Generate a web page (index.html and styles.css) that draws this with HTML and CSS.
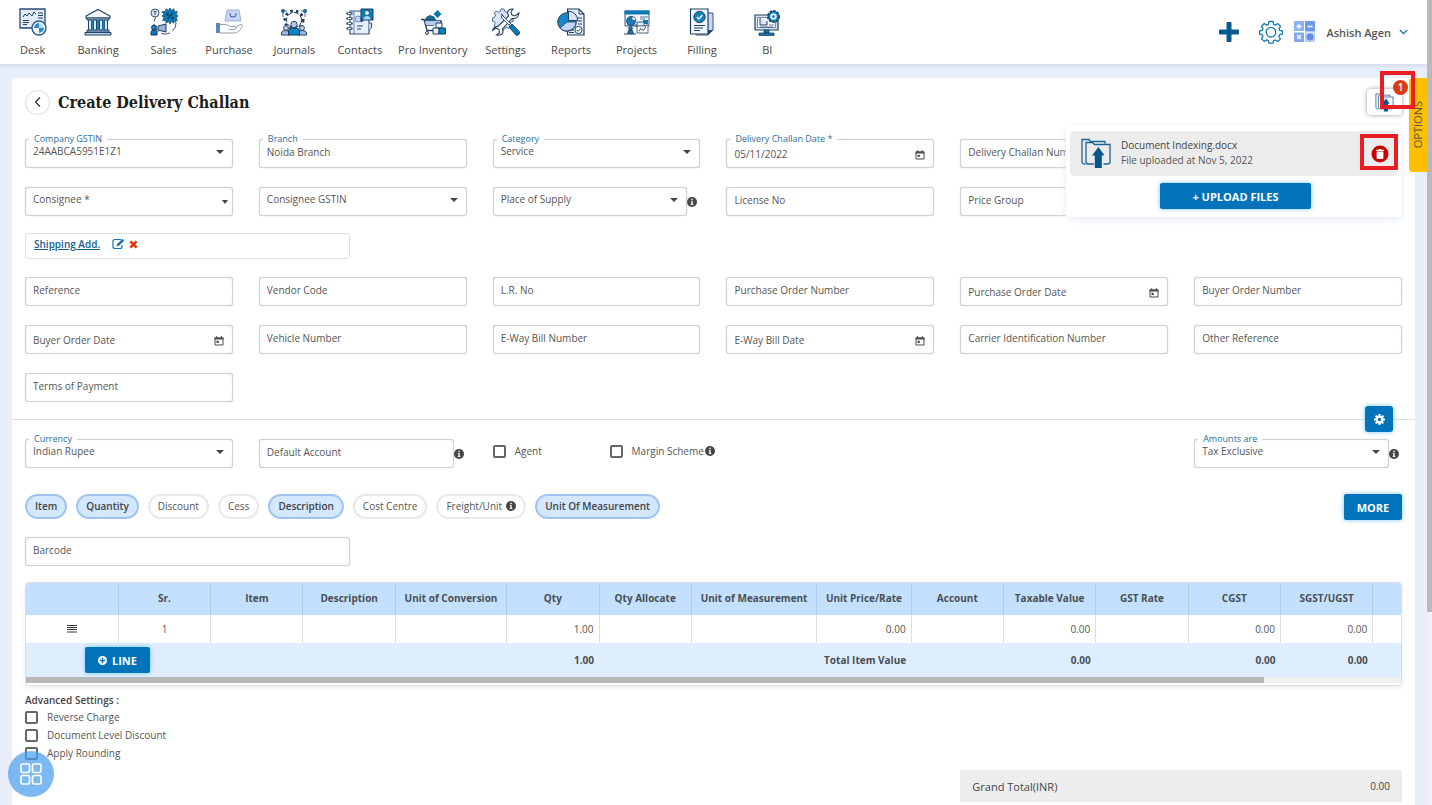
FILE: index.html
```html
<!DOCTYPE html>
<html lang="en">
<head>
<meta charset="utf-8">
<meta name="viewport" content="width=device-width, initial-scale=1">
<title>Create Delivery Challan</title>
<link rel="stylesheet" href="styles.css">
</head>
<body>
<svg class="sprite" aria-hidden="true">
  <symbol id="info" viewBox="0 0 12 12"><circle cx="6" cy="6" r="6" fill="#454545"/><path d="M4.4 5h2.5v3.6h.8v1.1H4.4V8.600h.8V6.100h-.8zM5.200 2.200h1.700v1.700H5.200z" fill="#fff"/></symbol>
  <symbol id="calendar" viewBox="0 0 10 10"><path d="M1 2h8v7H1z" fill="none" stroke="#4d4d4d"/><path d="M.5 1.500h9v2h-9zM2 .3h1.200v1.500H2zM6.800.3H8v1.500H6.800zM2.500 4.800h2.300v2.200H2.500z" fill="#4d4d4d"/></symbol>
  <symbol id="folder-up" viewBox="0 0 30 31"><path d="M4.500 26H3.500Q1 26 1 23.500V1.500h7l1.500 2H24v2M5 23V4.500h6.500l2 2H29V24q0 2-2.500 2h-4M13 26H7q-2 0-2-3" fill="none" stroke="#1c6494" stroke-width="1.300"/><path d="M17.500 9l6 8.500h-2.700V30h-7V17.500H11z" fill="#06558c"/></symbol>
</svg>

<header class="topbar">
  <nav class="nav" aria-label="Main">
    <a class="nav__item" href="#">
      <svg class="nav__icon" viewBox="0 0 28 28"><path d="M1 1h25v19H1z" fill="#e3ebfc" stroke="#2b4a78" stroke-width="1.300"/><path d="M4 9l2-3 2 2 2-3 3 3 2-4 2 2M19 5h5M19 7.500h5M19 10h5M4 12.500h6M4 14.500h6M4 16.500h4" fill="none" stroke="#22405f"/><circle cx="20" cy="20" r="7" fill="#fff" stroke="#23588a" stroke-width="1.400"/><path d="M20 20V15a5 5 0 0 0-5 5zM20 20v5a5 5 0 0 0 5-5z" fill="#2190cf"/><path d="M20 20h5a5 5 0 0 0-5-5z" fill="#bfe0f6"/></svg>
      <span>Desk</span></a>
    <a class="nav__item" href="#">
      <svg class="nav__icon" viewBox="0 0 28 28"><path d="M14 1.500L26 8v2H2V8z" fill="#f3f6ff" stroke="#22405f" stroke-width="1.200"/><path d="M3 10h22v2H3zM3 22h22v2H3zM1 24.500h26V27H1z" fill="#bccdf0" stroke="#22405f"/><path d="M4.500 12h3v10h-3zM20.500 12h3v10h-3zM9.500 12h3v10h-3zM15.500 12h3v10h-3z" fill="#dfe8fb" stroke="#22405f"/><path d="M7.500 12h2v10h-2zM13 12h2v10h-2zM18.500 12h2v10h-2z" fill="#1486c2"/></svg>
      <span>Banking</span></a>
    <a class="nav__item" href="#">
      <svg class="nav__icon" viewBox="0 0 28 28"><circle cx="15" cy="15" r="11" fill="none" stroke="#3c5676" stroke-dasharray="9 3"/><circle cx="5" cy="5" r="4" fill="#dbe5fa" stroke="#3c5676"/><path d="M5 3v4M3.500 3.500h3" stroke="#3c5676"/><path d="M20 0l1.500 2.500L24 .8l.3 2.900 3-.2-1.200 2.700L28 8l-1.900 1.800 1.200 2.700-3-.2-.3 2.900-2.500-1.700L20 16l-1.500-2.500-2.500 1.700-.3-2.900-3 .2 1.200-2.700L12 8l1.900-1.800-1.200-2.700 3 .2.300-2.900 2.500 1.700z" fill="#087bb9" stroke="#113d61" stroke-width=".7"/><path d="M17.500 11l5-6" stroke="#0c2f4c" stroke-width="1.200"/><circle cx="17.500" cy="6.500" r="1.200" fill="#0c2f4c"/><circle cx="22.500" cy="10" r="1.200" fill="#0c2f4c"/><path d="M8 18l8-2v8l-8-2z" fill="#96afdb" stroke="#173b5b"/><circle cx="4" cy="19.500" r="2.500" fill="#1486c2" stroke="#173b5b"/><path d="M1 27v-3q0-2 3-2t3 2v3z" fill="#087bb9" stroke="#173b5b"/></svg>
      <span>Sales</span></a>
    <a class="nav__item" href="#">
      <svg class="nav__icon" viewBox="0 0 28 28"><path d="M12 2h12l2 11H10z" fill="#c9d6f7" stroke="#8ca1cc" stroke-width=".8"/><path d="M15 5v1q0 3 3 3t3-3V5" fill="none" stroke="#52709e" stroke-width="1.200"/><path d="M5 16.500h5q3 0 5 2h4q2 0 2 1.500T19 21.500h-5M20 20l5-3.500q2-.5 2.500 1-2 6.500-8 7.500H5" fill="#fff" stroke="#8996a8" stroke-width=".9"/><path d="M1 15h4v10H1z" fill="#5887c0"/></svg>
      <span>Purchase</span></a>
    <a class="nav__item" href="#">
      <svg class="nav__icon" viewBox="0 0 28 28"><circle cx="14" cy="12" r="9" fill="none" stroke="#22405f" stroke-width="3" stroke-dasharray="2.500 3"/><circle cx="14" cy="12" r="7.500" fill="#fff" stroke="#22405f" stroke-dasharray="5 2"/><path d="M2 3h5M3 1v8M21 3h5M25 1v8" stroke="#3b6e9c"/><circle cx="3" cy="3" r="2" fill="#1b6a9f"/><circle cx="25" cy="3" r="2" fill="#1b6a9f"/><circle cx="6" cy="20" r="2.400" fill="#c3d4f6" stroke="#22405f"/><circle cx="22" cy="20" r="2.400" fill="#c3d4f6" stroke="#22405f"/><path d="M1.500 27v-2q0-2.500 4-2.500T10 25v2zM18 27v-2q0-2.500 4-2.500t4.500 2.500v2z" fill="#9ebae6" stroke="#22405f"/><circle cx="14" cy="16.500" r="3.200" fill="#b4c9f1" stroke="#22405f"/><path d="M8.500 27v-4q0-3 5.500-3t5.500 3v4z" fill="#0d84c3" stroke="#173b5b"/></svg>
      <span>Journals</span></a>
    <a class="nav__item" href="#">
      <svg class="nav__icon" viewBox="0 0 28 28"><path d="M4 3h19v23H4z" fill="#e7eefc" stroke="#34557f" stroke-width="1.200"/><path d="M8 3v23" stroke="#34557f" stroke-width=".7"/><path d="M1.500 5.500h4M1.500 10.500h4M1.500 15.500h4M1.500 20.500h4" stroke="#34557f" stroke-width="2.600" stroke-linecap="round"/><path d="M2 5.500h3M2 10.500h3M2 15.500h3M2 20.500h3" stroke="#fff"/><path d="M11 18h6M11 21h4" stroke="#22405f"/><circle cx="12" cy="11" r="3" fill="#c3d4f6" stroke="#6d8dc0"/><path d="M23 15h2.500v5L23 22" fill="#cad8f7" stroke="#34557f"/><path d="M15 1h12v11h-9l-3 2z" fill="#0a80bd" stroke="#173b5b"/><circle cx="21" cy="5" r="2.400" fill="#e8f1ff" stroke="#173b5b" stroke-width=".7"/><path d="M17.500 11.500q0-3.500 3.500-3.500t3.500 3.500z" fill="#b8cdf3"/></svg>
      <span>Contacts</span></a>
    <a class="nav__item nav__item--wide" href="#">
      <svg class="nav__icon" viewBox="0 0 28 28"><path d="M18.500 2l4 4-4 4-4-4z" fill="#0873a9"/><path d="M6 12l2-3 3-1.500 4 1.500 1.500 3z" fill="#0873a9" stroke="#173b5b" stroke-width=".8"/><path d="M2 11.500h3l3 11h8M5.500 13H22v6M7 17h8" fill="none" stroke="#22405f" stroke-width="1.300"/><path d="M6 13h15l-1 4H7z" fill="#b4cbed"/><circle cx="8" cy="25" r="1.500" fill="none" stroke="#22405f"/><path d="M17 15h6v5h-6z" fill="#edf3ff" stroke="#22405f"/><path d="M14 20h6v6h-6z" fill="#e3ecfb" stroke="#22405f"/><path d="M20 20h6.500v6H20z" fill="#0c80bd" stroke="#22405f"/></svg>
      <span>Pro Inventory</span></a>
    <a class="nav__item" href="#">
      <svg class="nav__icon" viewBox="0 0 28 28"><path d="M9 1h3l.7 2.400 2.300 1 2.300-1.200 2 2-1.200 2.300 1 2.300 2 .7v3l-2.400.7-1 2.300 1.200 2-2 2-2.300-1.200-2.300 1-.7 2H9l-.7-2.400-2.300-1-2 1-2-2 1.200-2-1-2.300L.5 13v-3l2-.7 1-2.300L2.300 5l2-2 2.200 1.200 2-1z" fill="#dce5fb" stroke="#3c5a86" stroke-width=".9"/><path d="M12 9l-3-3M10 8l4 4M27 5l-4 3-3-1-1-3 2-3q-4-.5-5.500 3l1 4L6 18.500q-4-.5-5.500 4L4 20l3 1.500.5 3.500-3 2q5 1 6.500-3l-.5-3L20 10.500q6 1 7-5.500z" fill="#fff" stroke="#22405f" stroke-width="1.100"/><path d="M9 9l1.500-1.500 8 8-1.500 1.500z" fill="#e8effe" stroke="#22405f" stroke-width=".8"/><path d="M17 19l3-3 7.500 8q.5 3-3 3.500z" fill="#087bb9" stroke="#143e61"/></svg>
      <span>Settings</span></a>
    <a class="nav__item" href="#">
      <svg class="nav__icon" viewBox="0 0 28 28"><path d="M10.500 1H22l5 5v21H10.500z" fill="#e9effd" stroke="#22405f" stroke-width="1.200"/><path d="M22 1v5h5M21 10h4M21 13h4M21 16h4M12 22h5M12 24.500h5" fill="none" stroke="#22405f"/><circle cx="10" cy="14" r="9.300" fill="#1687c4" stroke="#22405f"/><path d="M10 14L3 20a9.300 9.300 0 0 0 16-6z" fill="#c5d5f6" stroke="#22405f" stroke-width=".8"/><path d="M11.500 12.500V3.200a9.300 9.300 0 0 1 9.300 9.300z" fill="#d9e4fa" stroke="#22405f"/><circle cx="21.500" cy="22" r="3.600" fill="#fff" stroke="#22405f"/><path d="M19.800 22l1.300 1.400 2.400-2.800" fill="none" stroke="#22405f"/></svg>
      <span>Reports</span></a>
    <a class="nav__item" href="#">
      <svg class="nav__icon" viewBox="0 0 28 28"><path d="M2 3h24v15H2z" fill="#f0f5ff" stroke="#315c8b"/><path d="M1.500 2.500h25v4h-25zM20 12h5v4h-5z" fill="#0d79b5"/><path d="M17 9h8M17 11h5M4 17h10" stroke="#22405f" stroke-width=".7"/><circle cx="8" cy="13" r="4.500" fill="#127fbb" stroke="#22405f" stroke-width=".8"/><path d="M9 12V8.500a4 4 0 0 1 4 4z" fill="#fff" stroke="#22405f" stroke-width=".7"/><path d="M14 14h7v5h-7z" fill="#dce7fb" stroke="#22405f" stroke-width=".8"/><path d="M14 18h9l1-1.500 1 1.500v7H14z" fill="#fff" stroke="#22405f" stroke-width=".8"/><path d="M16 23l2-2.500 2 2 3-3.500" fill="none" stroke="#22405f"/><circle cx="7.500" cy="20.500" r="1.800" fill="#1687c4" stroke="#22405f"/><path d="M5 26v-2q0-2 2.500-2t2.500 2v2M1 26h12" fill="#0d79b5" stroke="#22405f"/></svg>
      <span>Projects</span></a>
    <a class="nav__item" href="#">
      <svg class="nav__icon" viewBox="0 0 28 28"><path d="M8 5h17v17l-5 5H8z" fill="#c8d7f8" stroke="#34557f"/><path d="M20 27v-5h5z" fill="#1b4d79"/><path d="M2.500 1H20v25H2.500z" fill="#f4f7ff" stroke="#22405f" stroke-width="1.200"/><circle cx="11.500" cy="9" r="5.700" fill="#0e83c2" stroke="#22405f"/><path d="M8.800 9l2 2 3.600-4" fill="none" stroke="#fff" stroke-width="1.300"/><path d="M6 17.500h11M6 20h9M6 22.500h6" stroke="#22405f"/></svg>
      <span>Filling</span></a>
    <a class="nav__item" href="#">
      <svg class="nav__icon" viewBox="0 0 28 28"><path d="M2 7h23v15H2z" fill="#d5e2fb" stroke="#22405f" stroke-width="1.200"/><path d="M4.500 9.500h18v10h-18z" fill="#fff" stroke="#4e709c" stroke-width=".8"/><path d="M7 10v7h7v-4" fill="#dce7fb" stroke="#22405f"/><path d="M16 17h5M7 19h13" stroke="#22405f" stroke-width=".7"/><path d="M11 22h5v3h-5zM6 25h15v2.500H6z" fill="#1176ad" stroke="#22405f" stroke-width=".8"/><circle cx="20.500" cy="8.500" r="5.700" fill="#0e7db8" stroke="#174263" stroke-width="1.600" stroke-dasharray="2.500 1.200"/><circle cx="20.500" cy="8.500" r="3.200" fill="#e7f2ff"/><circle cx="20.500" cy="8.500" r="1.200" fill="#1e5b87"/></svg>
      <span>BI</span></a>
  </nav>
  <div class="tools">
    <button class="icon-button" type="button" aria-label="Add new"><svg class="tools__plus" viewBox="0 0 20 20"><path d="M7.500 1q0-1 1-1h3q1 0 1 1v6.500H19q1 0 1 1v3q0 1-1 1h-6.500V19q0 1-1 1h-3q-1 0-1-1v-6.500H1q-1 0-1-1v-3q0-1 1-1h6.500z" fill="#075a8e"/></svg></button>
    <button class="icon-button" type="button" aria-label="Preferences"><svg class="tools__gear" viewBox="0 0 24 24"><path d="M10 1.500h4l.6 2.800 1.800.8L18.800 3.600l2.700 2.700L20 8.700l.7 1.700 2.800.6v3l-2.800.7-.8 1.800 1.600 2.300-2.700 2.700-2.400-1.500-1.800.7-.6 2.500h-4l-.6-2.600-1.800-.7-2.400 1.500-2.700-2.700L4 16.500l-.8-1.800L.5 14v-3l2.800-.7.700-1.700-1.500-2.400 2.700-2.700 2.400 1.600 1.800-.8z" fill="none" stroke="#147bb5" stroke-width="1.300" stroke-linejoin="round"/><circle cx="12" cy="12.200" r="4.800" fill="none" stroke="#147bb5" stroke-width="1.300"/></svg></button>
    <button class="icon-button" type="button" aria-label="Calculator"><svg class="tools__calc" viewBox="0 0 22 22"><path d="M0 1q0-1 1-1h9v10H0zM12 12h9v8q0 1-1 1h-8z" fill="#8fb3ee"/><path d="M0 11.500h10v9.500H1q-1 0-1-1z" fill="#80a8eb"/><path d="M11 0h9q1 0 1 1v9.500H11z" fill="#6b9ae8"/><path d="M11 11.500h10V20q0 1-1 1h-9z" fill="#b9cef4"/><path d="M5 3v5M2.500 5.500h5M13.500 5.500h5M3 14l4 4M7 14l-4 4" stroke="#fff" stroke-width="1.300"/><circle cx="16" cy="16" r="3.500" fill="#608ddd"/></svg></button>
    <button class="account" type="button"><span class="account__name">Ashish Agen</span><svg class="account__chevron" viewBox="0 0 9 6"><path d="M.8 1l3.700 3.700L8.200 1" fill="none" stroke="#1a6fa5" stroke-width="1.200"/></svg></button>
  </div>
</header>

<main class="page">
  <section class="card">
    <div class="heading">
      <button class="back" type="button" aria-label="Back"><svg class="back__icon" viewBox="0 0 8 12"><path d="M6 1.500L1.500 6 6 10.500" fill="none" stroke="#333" stroke-width="1.300"/></svg></button>
      <h1 class="title">Create Delivery Challan</h1>
      <button class="attach" type="button" aria-label="Attachments"><svg class="attach__icon"><use href="#folder-up"/></svg><span class="badge">1</span></button>
    </div>

    <div class="grid">
      <div class="field field--select"><label class="field__label" for="gstin">Company GSTIN</label><select class="control" id="gstin"><option>24AABCA5951E1Z1</option></select></div>
      <div class="field"><label class="field__label" for="branch">Branch</label><input class="control" id="branch" value="Noida Branch"></div>
      <div class="field field--select"><label class="field__label" for="category">Category</label><select class="control" id="category"><option>Service</option></select></div>
      <div class="field field--date"><label class="field__label" for="challan-date">Delivery Challan Date *</label><input class="control" id="challan-date" value="05/11/2022"><svg class="field__calendar"><use href="#calendar"/></svg></div>
      <div class="field"><input class="control" aria-label="Delivery Challan Number" placeholder="Delivery Challan Number"></div>
      <div></div>
      <div class="field field--combo"><select class="control" aria-label="Consignee"><option>Consignee *</option></select></div>
      <div class="field field--select"><select class="control" aria-label="Consignee GSTIN"><option>Consignee GSTIN</option></select></div>
      <div class="with-info"><div class="field field--select"><select class="control" aria-label="Place of Supply"><option>Place of Supply</option></select></div><svg class="info"><use href="#info"/></svg></div>
      <div class="field"><input class="control" aria-label="License No" placeholder="License No"></div>
      <div class="field"><input class="control" aria-label="Price Group" placeholder="Price Group"></div>
    </div>

    <div class="quarters quarters--shipping">
      <div class="shipping">
        <a class="shipping__link" href="#">Shipping Add.</a>
        <button class="icon-button" type="button" aria-label="Edit shipping address"><svg class="shipping__edit" viewBox="0 0 13 12"><path d="M9 1.500H3q-2 0-2 2v5q0 2 2 2h5q2 0 2-2V7" fill="none" stroke="#1a73b3" stroke-width="1.200"/><path d="M4.500 8.500l.6-2.500L10.500.7l1.800 1.800L7 7.800z" fill="#1a73b3"/></svg></button>
        <button class="icon-button" type="button" aria-label="Remove shipping address"><svg class="shipping__remove" viewBox="0 0 8 8"><path d="M1.200 1.200l5.600 5.600M6.800 1.200L1.200 6.800" stroke="#dc3410" stroke-width="2.400"/></svg></button>
      </div>
    </div>

    <div class="grid">
      <div class="field"><input class="control" aria-label="Reference" placeholder="Reference"></div>
      <div class="field"><input class="control" aria-label="Vendor Code" placeholder="Vendor Code"></div>
      <div class="field"><input class="control" aria-label="L.R. No" placeholder="L.R. No"></div>
      <div class="field"><input class="control" aria-label="Purchase Order Number" placeholder="Purchase Order Number"></div>
      <div class="field field--date"><input class="control" aria-label="Purchase Order Date" placeholder="Purchase Order Date"><svg class="field__calendar"><use href="#calendar"/></svg></div>
      <div class="field"><input class="control" aria-label="Buyer Order Number" placeholder="Buyer Order Number"></div>
      <div class="field field--date"><input class="control" aria-label="Buyer Order Date" placeholder="Buyer Order Date"><svg class="field__calendar"><use href="#calendar"/></svg></div>
      <div class="field"><input class="control" aria-label="Vehicle Number" placeholder="Vehicle Number"></div>
      <div class="field"><input class="control" aria-label="E-Way Bill Number" placeholder="E-Way Bill Number"></div>
      <div class="field field--date"><input class="control" aria-label="E-Way Bill Date" placeholder="E-Way Bill Date"><svg class="field__calendar"><use href="#calendar"/></svg></div>
      <div class="field"><input class="control" aria-label="Carrier Identification Number" placeholder="Carrier Identification Number"></div>
      <div class="field"><input class="control" aria-label="Other Reference" placeholder="Other Reference"></div>
      <div class="field"><input class="control" aria-label="Terms of Payment" placeholder="Terms of Payment"></div>
    </div>

    <div class="divider">
      <button class="divider__gear" type="button" aria-label="Field settings"><svg class="divider__icon" viewBox="0 0 12 12"><circle cx="6" cy="6" r="3.200" fill="none" stroke="#fff" stroke-width="2.600"/><path d="M6 0v2.500M6 9.500V12M0 6h2.500M9.500 6H12M1.800 1.800l1.700 1.700M8.500 8.500l1.700 1.700M1.800 10.200l1.700-1.700M8.500 3.500l1.700-1.700" stroke="#fff" stroke-width="2.200"/></svg></button>
    </div>

    <div class="grid grid--twelve">
      <div class="field field--select span-2"><label class="field__label" for="currency">Currency</label><select class="control" id="currency"><option>Indian Rupee</option></select></div>
      <div class="with-info span-2"><div class="field"><input class="control" aria-label="Default Account" placeholder="Default Account"></div><svg class="info"><use href="#info"/></svg></div>
      <label class="check"><input class="check__box" type="checkbox"><span>Agent</span></label>
      <label class="check span-3"><input class="check__box" type="checkbox"><span>Margin Scheme</span><svg class="info info--inline"><use href="#info"/></svg></label>
      <div class="with-info span-last"><div class="field field--select"><label class="field__label" for="amounts">Amounts are</label><select class="control" id="amounts"><option>Tax Exclusive</option></select></div><svg class="info"><use href="#info"/></svg></div>
    </div>

    <div class="columns-bar">
      <button class="chip chip--on" type="button">Item</button>
      <button class="chip chip--on" type="button">Quantity</button>
      <button class="chip" type="button">Discount</button>
      <button class="chip" type="button">Cess</button>
      <button class="chip chip--on" type="button">Description</button>
      <button class="chip" type="button">Cost Centre</button>
      <button class="chip" type="button">Freight/Unit<svg class="info info--chip"><use href="#info"/></svg></button>
      <button class="chip chip--on" type="button">Unit Of Measurement</button>
      <button class="button button--more" type="button">MORE</button>
    </div>

    <div class="quarters quarters--barcode">
      <div class="field"><input class="control" aria-label="Barcode" placeholder="Barcode"></div>
    </div>

    <div class="sheet">
      <div class="sheet__view">
        <table class="items">
          <colgroup><col span="4" class="col"><col class="col-conversion"><col span="2" class="col"><col class="col-measure"><col class="col-price"><col span="5" class="col"><col class="col-rest"></colgroup>
          <thead><tr><th></th><th>Sr.</th><th>Item</th><th>Description</th><th>Unit of Conversion</th><th>Qty</th><th>Qty Allocate</th><th>Unit of Measurement</th><th>Unit Price/Rate</th><th>Account</th><th>Taxable Value</th><th>GST Rate</th><th>CGST</th><th>SGST/UGST</th><th></th></tr></thead>
          <tbody><tr><td><svg class="grip" viewBox="0 0 10 10"><path d="M0 1.500h10M0 3.500h10M0 5.500h10M0 8h10" stroke="#333" stroke-width="1.100"/></svg></td><td>1</td><td></td><td></td><td></td><td class="num">1.00</td><td></td><td></td><td class="num">0.00</td><td></td><td class="num">0.00</td><td></td><td class="num">0.00</td><td class="num">0.00</td><td></td></tr></tbody>
          <tfoot><tr><td colspan="2"><button class="button button--line" type="button"><svg class="button__icon" viewBox="0 0 10 10"><circle cx="5" cy="5" r="5" fill="#fff"/><path d="M5 2v6M2 5h6" stroke="#0073bb" stroke-width="1.500"/></svg>LINE</button></td><td></td><td></td><td></td><td class="num">1.00</td><td></td><td></td><td class="num">Total Item Value</td><td></td><td class="num">0.00</td><td></td><td class="num">0.00</td><td class="num">0.00</td><td></td></tr></tfoot>
        </table>
      </div>
      <div class="sheet__scroll"><div class="sheet__thumb"></div></div>
    </div>

    <fieldset class="advanced">
      <legend class="advanced__title">Advanced Settings :</legend>
      <label class="check"><input class="check__box" type="checkbox"><span>Reverse Charge</span></label>
      <label class="check"><input class="check__box" type="checkbox"><span>Document Level Discount</span></label>
      <label class="check"><input class="check__box" type="checkbox"><span>Apply Rounding</span></label>
    </fieldset>

    <div class="grid grid--total">
      <div class="total"><span>Grand Total(INR)</span><span class="total__value">0.00</span></div>
    </div>

    <div class="uploads">
      <div class="file">
        <svg class="file__icon"><use href="#folder-up"/></svg>
        <div class="file__text"><div class="file__name">Document Indexing.docx</div><div>File uploaded at Nov 5, 2022</div></div>
        <button class="file__delete" type="button" aria-label="Delete file"><svg class="file__trash" viewBox="0 0 18 18"><circle cx="9" cy="9" r="8.500" fill="#c90202"/><path d="M5 4.800h2.500l.5-.8h2l.5.8H13v1.200H5zM5.600 6.500h6.800v6.500q0 1-1 1H6.600q-1 0-1-1z" fill="#fff"/></svg></button>
      </div>
      <button class="button button--upload" type="button">+ UPLOAD FILES</button>
    </div>
    <div class="marker marker--badge"></div>
    <div class="marker marker--delete"></div>
  </section>
</main>

<button class="options" type="button">OPTIONS</button>
<div class="scrollbar"><div class="scrollbar__thumb"></div></div>
<button class="launcher" type="button" aria-label="Open apps"><svg class="launcher__icon" viewBox="0 0 22 22"><g fill="none" stroke="#fff" stroke-width="1.700"><rect x="1" y="1" width="8.500" height="8.500" rx="1.500"/><rect x="12.500" y="1" width="8.500" height="8.500" rx="1.500"/><rect x="1" y="12.500" width="8.500" height="8.500" rx="1.500"/><rect x="12.500" y="12.500" width="8.500" height="8.500" rx="1.500"/></g></svg></button>
</body>
</html>
```
FILE: styles.css
```css
* { box-sizing: border-box; }

body {
  display: flex;
  flex-direction: column;
  min-height: 100vh;
  margin: 0;
  background: #e8eefa;
  color: #555;
  font-family: "Open Sans", sans-serif;
  font-size: 10px;
  line-height: 15px;
}

button, input, select { margin: 0; color: inherit; font: inherit; }
button { padding: 0; border: 0; background: none; cursor: pointer; }
svg { display: block; flex: none; }
.sprite { position: absolute; width: 0; height: 0; }

/* Top bar */
.topbar {
  display: flex;
  align-items: center;
  justify-content: space-between;
  height: 64px;
  padding-right: 24px;
  background: #fff;
  box-shadow: 0 1px 5px #cdd4e4;
  font-size: 11px;
}
.nav { display: flex; flex: 0 1 800px; }
.nav__item {
  display: flex;
  flex: 1 1 65px;
  flex-direction: column;
  align-items: center;
  gap: 6px;
  color: #484848;
  text-decoration: none;
  white-space: nowrap;
}
.nav__item--wide { flex-basis: 80px; }
.nav__icon { width: 28px; height: 28px; }
.tools { display: flex; align-items: center; }
.tools__plus { width: 20px; height: 20px; }
.tools__gear { width: 24px; height: 24px; margin-left: 20px; }
.tools__calc { width: 22px; height: 22px; margin-left: 11px; }
.account { display: flex; align-items: center; gap: 8px; margin-left: 10px; font-weight: 600; }
.account__name { white-space: nowrap; }
.account__chevron { width: 9px; height: 6px; }

/* Card */
.page { display: flex; flex: 1; padding: 14px 17px 0 12px; }
.card {
  position: relative;
  flex: 1;
  min-width: 0;
  padding: 11px 13px 3px;
  border-radius: 4px 4px 0 0;
  background: #fff;
}
.heading { display: flex; align-items: center; gap: 8px; height: 26px; margin-bottom: 24px; }
.back {
  display: flex;
  align-items: center;
  justify-content: center;
  width: 25px;
  height: 25px;
  border: 1px solid #ddd;
  border-radius: 50%;
}
.back__icon { width: 8px; height: 12px; }
.title {
  margin: 0;
  padding-top: 2px;
  color: #1c1c1c;
  font: bold 16px/20px "DejaVu Serif Condensed", "DejaVu Serif", serif;
}
.attach {
  position: relative;
  width: 35px;
  height: 26px;
  margin-left: auto;
  padding: 4px 8px;
  border-radius: 4px;
  box-shadow: 0 0 4px #999;
}
.attach__icon { width: 19px; height: 19px; }
.badge {
  position: absolute;
  z-index: 4;
  top: -9px;
  right: -6px;
  width: 15px;
  height: 15px;
  border-radius: 50%;
  background: #dd3a10;
  color: #fff;
  font-weight: 600;
}

/* Form */
.grid { display: grid; grid-template-columns: repeat(6, minmax(0, 1fr)); gap: 19px 26px; }
.grid--twelve { grid-template-columns: repeat(12, minmax(0, 1fr)); }
.span-2 { grid-column: span 2; }
.span-3 { grid-column: span 3; }
.span-last { grid-column: 11 / 13; }
.quarters { display: grid; grid-template-columns: repeat(4, minmax(0, 1fr)); gap: 26px; }
.quarters--shipping { margin: 17px 0 18px; }
.quarters--barcode { margin-top: 17px; }
.field { position: relative; flex: 1; height: 29px; }
.control {
  display: block;
  width: 100%;
  height: 29px;
  padding: 0 7px 4px;
  border: 1px solid #d2d2d2;
  border-radius: 3px;
  outline: 0;
  appearance: none;
  background: #fff;
  box-shadow: 0 0 1px #bbb, inset 0 0 3px #f2f2f2;
}
.control::placeholder { color: #555; opacity: 1; }
.field--date .control { padding-top: 1px; padding-bottom: 1px; }
.field__label {
  position: absolute;
  top: -7px;
  left: 4px;
  padding: 0 5px;
  background: linear-gradient(#fff, #fff) center / 100% 5px no-repeat;
  color: #2b6f9c;
  font-size: 9px;
  line-height: 14px;
}
.field__calendar { position: absolute; top: 11px; right: 9px; width: 10px; height: 10px; }
.field--select::after, .field--combo::after {
  content: "";
  position: absolute;
  top: 11px;
  right: 9px;
  border: 4px solid transparent;
  border-top: 4px solid #444;
  border-bottom: 0;
  pointer-events: none;
}
.field--combo::after { top: 13px; right: 5px; border-width: 4px 3px 0; }
.with-info { display: flex; align-items: center; padding-right: 3px; }
.info { width: 10px; height: 10px; }
.info--inline { margin-left: -8px; }
.info--chip { margin-left: 4px; }
.shipping {
  display: flex;
  align-items: center;
  height: 26px;
  padding: 0 8px 4px;
  border: 1px solid #e0e0e0;
  border-radius: 3px;
}
.shipping__link { margin-right: 12px; color: #14608f; font-weight: 600; }
.shipping__edit { width: 13px; height: 12px; margin-right: 4px; }
.shipping__remove { width: 9px; height: 9px; }

.divider { position: relative; height: 1px; margin: 17px -13px 19px; background: #e0e0e0; }
.divider__gear {
  position: absolute;
  top: -13px;
  right: 22px;
  display: flex;
  align-items: center;
  justify-content: center;
  width: 28px;
  height: 26px;
  border-radius: 3px;
  background: #0073bb;
  box-shadow: 0 0 5px #7bc4f0;
}
.divider__icon { width: 11px; height: 11px; }

.check { display: flex; align-items: center; gap: 9px; height: 24px; white-space: nowrap; }
.check__box {
  width: 13px;
  height: 13px;
  border: 2px solid #666;
  border-radius: 2px;
  appearance: none;
}

/* Column chips */
.columns-bar { display: flex; align-items: flex-start; gap: 9px; margin-top: 26px; }
.chip {
  display: flex;
  align-items: center;
  height: 25px;
  padding: 0 8px 1px;
  border: 2px solid #e8e8e8;
  border-radius: 13px;
  white-space: nowrap;
}
.chip--on { border-color: #9fc4f0; background: #d3e7fd; color: #444; font-weight: 600; }
.button {
  display: flex;
  align-items: center;
  justify-content: center;
  height: 26px;
  border-radius: 2px;
  background: #0073bb;
  box-shadow: 0 0 5px #7bc4f0;
  color: #fff;
  font-size: 11px;
  font-weight: 700;
}
.button--more { width: 58px; margin-left: auto; }
.button--line { gap: 5px; width: 65px; margin-left: 59px; }
.button__icon { width: 9px; height: 9px; }

/* Items table */
.sheet {
  margin-top: 16px;
  padding-bottom: 2px;
  overflow: hidden;
  border: 1px solid #ddd;
  border-radius: 4px;
  box-shadow: 0 2px 5px #eee;
}
.sheet__view { overflow: hidden; }
.items { width: 111%; min-width: 1532px; border-collapse: collapse; table-layout: fixed; }
.col { width: 92px; }
.col-conversion { width: 111px; }
.col-measure { width: 125px; }
.col-price { width: 94px; }
.col-rest { width: 184px; }
.items th, .items td { padding: 0; text-align: center; white-space: nowrap; }
.items th { height: 32px; padding-bottom: 2px; border-right: 1px solid #aecdec; background: #c3e0fe; color: #4a4f55; font-weight: 700; }
.items tbody td { height: 28px; border-right: 1px solid #ddd; }
.items tfoot td { height: 34px; background: #deeefe; color: #4a4f55; font-weight: 700; }
.items .num { padding-right: 5px; text-align: right; }
.grip { width: 10px; height: 10px; margin: 0 auto; }
.sheet__scroll { height: 6px; background: #f1f1f1; }
.sheet__thumb { width: 90%; height: 6px; background: #b9b9b9; }

/* Advanced settings and total */
.advanced { margin: 7px 0 0; padding: 0; border: 0; }
.advanced__title { padding: 0; color: #444; font-weight: 600; }
.advanced .check { height: 18px; }
.grid--total { margin-top: 8px; }
.total {
  display: flex;
  grid-column: 5 / 7;
  align-items: center;
  justify-content: space-between;
  height: 32px;
  padding: 0 12px;
  border-radius: 2px;
  background: #ededed;
  color: #444;
  font-size: 11px;
}
.total__value { font-size: 10px; }

/* Upload menu */
.uploads {
  position: absolute;
  z-index: 2;
  top: 48px;
  right: 14px;
  width: 335px;
  padding: 5px 4px 8px;
  border-radius: 3px;
  background: #fff;
  box-shadow: 0 2px 8px #e1eaf4;
}
.file { display: flex; align-items: center; height: 45px; padding: 0 8px 0 11px; border-radius: 4px; background: #ececec; }
.file__icon { width: 30px; height: 31px; }
.file__text { margin-left: 10px; padding-bottom: 2px; }
.file__name { color: #444; font-weight: 500; }
.file__delete { margin-left: auto; }
.file__trash { width: 18px; height: 18px; }
.button--upload { width: 151px; margin: 7px 0 0 90px; }
.marker { position: absolute; z-index: 3; border: 4px solid #eb1c24; pointer-events: none; }
.marker--badge { top: -7px; right: 0; width: 35px; height: 38px; }
.marker--delete { top: 56px; right: 17px; width: 38px; height: 36px; }

/* Floating chrome */
.options {
  position: absolute;
  z-index: 1;
  top: 78px;
  right: 5px;
  width: 18px;
  height: 94px;
  border-radius: 4px 0 0 4px;
  background: #ffbf00;
  color: #555;
  font-size: 11px;
  line-height: 18px;
  writing-mode: sideways-lr;
}
.scrollbar { position: fixed; top: 0; right: 0; bottom: 0; width: 5px; background: #f1f1f1; }
.scrollbar__thumb { height: 76%; background: #b9b9b9; }
.launcher {
  position: fixed;
  bottom: 8px;
  left: 8px;
  display: flex;
  align-items: center;
  justify-content: center;
  width: 46px;
  height: 46px;
  border-radius: 50%;
  background: rgba(74, 158, 238, .72);
}
.launcher__icon { width: 22px; height: 22px; }
```
